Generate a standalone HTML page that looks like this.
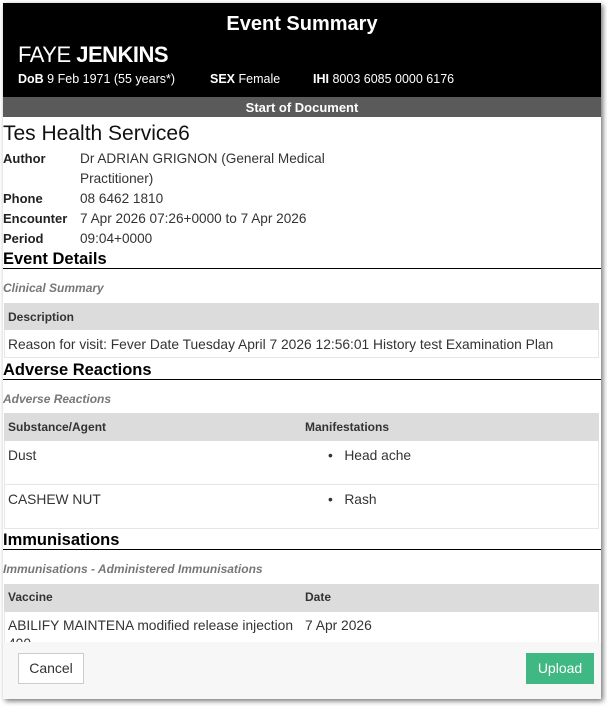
<!DOCTYPE html>
<html><head><style>
*{margin:0;padding:0;box-sizing:border-box}
body{width:607px;height:707px;background:#fff;font-family:"Liberation Sans",sans-serif;position:relative;overflow:hidden;color:#222}
.a{position:absolute;white-space:nowrap}
#frame{position:absolute;left:3px;top:3px;width:598px;height:696px;background:#fff;box-shadow:2px 2px 5px rgba(0,0,0,.55);overflow:hidden}
.b{font-weight:bold}
.lbl{font-weight:bold;font-size:13px;color:#222}
.val{font-size:13.6px;color:#333}
.h{font-weight:bold;font-size:16.5px;color:#000}
.line{position:absolute;left:0;width:598px;height:1px;background:#000}
.it{font-style:italic;font-weight:bold;font-size:12px;color:#777}
.th{position:absolute;left:1px;width:595px;background:#dcdcdc}
.row{position:absolute;left:1px;width:595px;border:1px solid #e6e6e6;border-top:none}
.t{font-size:13.8px;color:#333}
</style></head><body>
<div id="frame">
<div class="a" style="left:0;top:0;width:598px;height:94px;background:#000"></div>
<div class="a b" style="left:0;top:10px;width:598px;text-align:center;color:#fff;font-size:20px">Event Summary</div>
<div class="a" style="left:15px;top:39px;color:#fff;font-size:22px;letter-spacing:-0.5px">FAYE <b>JENKINS</b></div>
<div class="a" style="left:15px;top:69px;color:#fff;font-size:12.5px"><b>DoB</b> 9 Feb 1971 (55 years*)</div>
<div class="a" style="left:207px;top:69px;color:#fff;font-size:12.5px"><b>SEX</b> Female</div>
<div class="a" style="left:310px;top:69px;color:#fff;font-size:12.5px"><b>IHI</b> 8003 6085 0000 6176</div>
<div class="a" style="left:0;top:94px;width:598px;height:20px;background:#5a5a5a"></div>
<div class="a b" style="left:0;top:97px;width:598px;text-align:center;color:#fff;font-size:13px">Start of Document</div>
<div class="a" style="left:0;top:119px;font-size:21px;color:#111">Tes Health Service6</div>
<div class="a lbl" style="left:0;top:148px">Author</div><div class="a val" style="left:77px;top:148px">Dr ADRIAN GRIGNON (General Medical</div>
<div class="a val" style="left:77px;top:168px">Practitioner)</div>
<div class="a lbl" style="left:0;top:188px">Phone</div><div class="a val" style="left:77px;top:188px">08 6462 1810</div>
<div class="a lbl" style="left:0;top:208px">Encounter</div><div class="a val" style="left:77px;top:208px">7 Apr 2026 07:26+0000 to 7 Apr 2026</div>
<div class="a lbl" style="left:0;top:228px">Period</div><div class="a val" style="left:77px;top:228px">09:04+0000</div>
<div class="a h" style="left:0;top:247px">Event Details</div>
<div class="line" style="top:265px"></div>
<div class="a it" style="left:0;top:278px">Clinical Summary</div>
<div class="th" style="top:300px;height:27px"></div>
<div class="a b" style="left:5px;top:307px;font-size:12px;color:#333">Description</div>
<div class="row" style="top:327px;height:28px"></div>
<div class="a t" style="left:5px;top:334px">Reason for visit: Fever Date Tuesday April 7 2026 12:56:01 History test Examination Plan</div>
<div class="a h" style="left:0;top:358px">Adverse Reactions</div>
<div class="line" style="top:376px"></div>
<div class="a it" style="left:0;top:389px">Adverse Reactions</div>
<div class="th" style="top:410px;height:28px"></div>
<div class="a b" style="left:5px;top:417px;font-size:12px;color:#333">Substance/Agent</div>
<div class="a b" style="left:302px;top:417px;font-size:12px;color:#333">Manifestations</div>
<div class="row" style="top:438px;height:44px"></div>
<div class="row" style="top:482px;height:44px"></div>
<div class="a t" style="left:5px;top:445px">Dust</div>
<div class="a t" style="left:325px;top:445px">•&nbsp;&nbsp; Head ache</div>
<div class="a t" style="left:5px;top:489px">CASHEW NUT</div>
<div class="a t" style="left:325px;top:489px">•&nbsp;&nbsp; Rash</div>
<div class="a h" style="left:0;top:528px">Immunisations</div>
<div class="line" style="top:546px"></div>
<div class="a it" style="left:0;top:559px">Immunisations - Administered Immunisations</div>
<div class="th" style="top:581px;height:28px"></div>
<div class="a b" style="left:5px;top:587px;font-size:12px;color:#333">Vaccine</div>
<div class="a b" style="left:302px;top:587px;font-size:12px;color:#333">Date</div>
<div class="row" style="top:609px;height:40px"></div>
<div class="a t" style="left:5px;top:615px">ABILIFY MAINTENA modified release injection</div>
<div class="a t" style="left:5px;top:633px">400</div>
<div class="a t" style="left:302px;top:615px">7 Apr 2026</div>
<div class="a" style="left:0;top:639px;width:598px;height:60px;background:#f7f7f7"></div>
<div class="a" style="left:15px;top:650px;width:66px;height:31px;background:#fff;border:1px solid #ccc;font-size:14px;color:#333;text-align:center;line-height:29px">Cancel</div>
<div class="a" style="left:523px;top:650px;width:68px;height:31px;background:#3fb883;font-size:14px;color:#fff;text-align:center;line-height:31px">Upload</div>
</div>
</body></html>
